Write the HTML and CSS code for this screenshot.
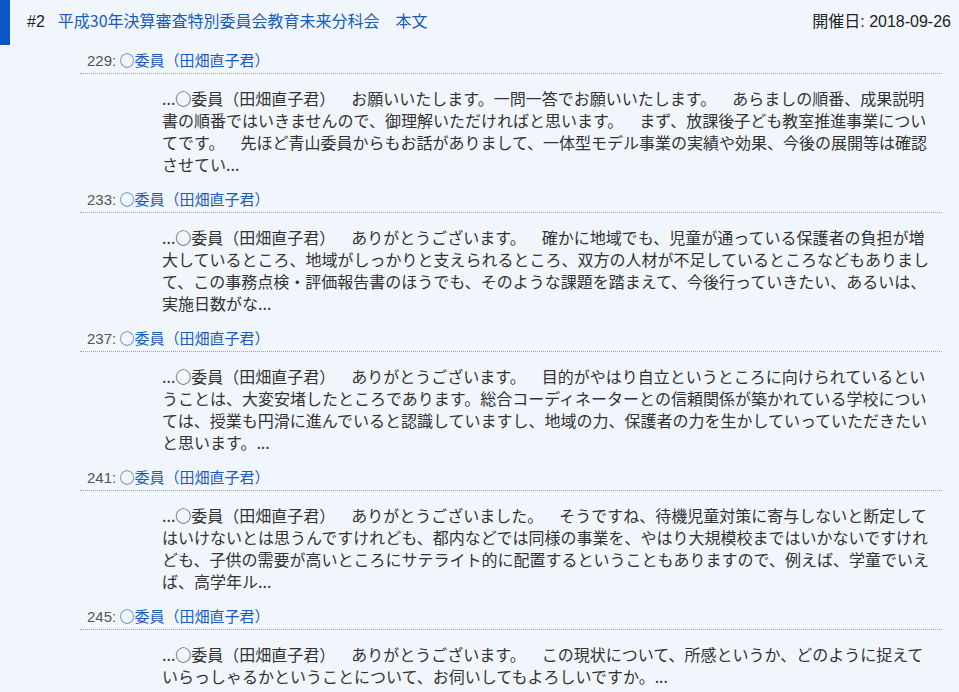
FILE: index.html
```html
<!DOCTYPE html>
<html lang="ja">
<head>
<meta charset="utf-8">
<title>平成30年決算審査特別委員会教育未来分科会　本文</title>
<link rel="stylesheet" href="styles.css">
</head>
<body>
<div class="page">
  <header class="meeting">
    <span class="meeting-no">#2</span>
    <a class="meeting-title" href="#">平成30年決算審査特別委員会教育未来分科会　本文</a>
    <span class="meeting-date">開催日: 2018-09-26</span>
  </header>
  <div class="hits">
    <div class="hit">
      <div class="hit-head"><span class="hit-no">229:</span> <a class="speaker" href="#">○委員（田畑直子君）</a></div>
      <p class="snippet">...○委員（田畑直子君）　お願いいたします。一問一答でお願いいたします。　あらましの順番、成果説明書の順番ではいきませんので、御理解いただければと思います。　まず、放課後子ども教室推進事業についてです。　先ほど青山委員からもお話がありまして、一体型モデル事業の実績や効果、今後の展開等は確認させてい...</p>
    </div>
    <div class="hit">
      <div class="hit-head"><span class="hit-no">233:</span> <a class="speaker" href="#">○委員（田畑直子君）</a></div>
      <p class="snippet">...○委員（田畑直子君）　ありがとうございます。　確かに地域でも、児童が通っている保護者の負担が増大しているところ、地域がしっかりと支えられるところ、双方の人材が不足しているところなどもありまして、この事務点検・評価報告書のほうでも、そのような課題を踏まえて、今後行っていきたい、あるいは、実施日数がな...</p>
    </div>
    <div class="hit">
      <div class="hit-head"><span class="hit-no">237:</span> <a class="speaker" href="#">○委員（田畑直子君）</a></div>
      <p class="snippet">...○委員（田畑直子君）　ありがとうございます。　目的がやはり自立というところに向けられているということは、大変安堵したところであります。総合コーディネーターとの信頼関係が築かれている学校については、授業も円滑に進んでいると認識していますし、地域の力、保護者の力を生かしていっていただきたいと思います。...</p>
    </div>
    <div class="hit">
      <div class="hit-head"><span class="hit-no">241:</span> <a class="speaker" href="#">○委員（田畑直子君）</a></div>
      <p class="snippet">...○委員（田畑直子君）　ありがとうございました。　そうですね、待機児童対策に寄与しないと断定してはいけないとは思うんですけれども、都内などでは同様の事業を、やはり大規模校まではいかないですけれども、子供の需要が高いところにサテライト的に配置するということもありますので、例えば、学童でいえば、高学年ル...</p>
    </div>
    <div class="hit">
      <div class="hit-head"><span class="hit-no">245:</span> <a class="speaker" href="#">○委員（田畑直子君）</a></div>
      <p class="snippet">...○委員（田畑直子君）　ありがとうございます。　この現状について、所感というか、どのように捉えていらっしゃるかということについて、お伺いしてもよろしいですか。...</p>
    </div>
  </div>
</div>
</body>
</html>
```
FILE: styles.css
```css
html, body {
  margin: 0;
  padding: 0;
  background: #f1f6fd;
}
body {
  font-family: "Noto Sans CJK JP", "Liberation Sans", sans-serif;
  color: #333;
  height: 692px;
  overflow: hidden;
  text-spacing-trim: space-all;
}
a {
  text-decoration: none;
}
.meeting {
  display: flex;
  align-items: baseline;
  height: 45px;
  box-sizing: border-box;
  border-left: 10px solid #0b55c6;
  padding: 8px 8px 0 17px;
  line-height: 24px;
}
.meeting-no {
  font-family: "Liberation Sans", "Noto Sans CJK JP", sans-serif;
  font-size: 16px;
  color: #222;
  margin-right: 13px;
}
.meeting-title {
  font-size: 16px;
  color: #1a5cba;
}
.meeting-date {
  font-family: "Liberation Sans", "Noto Sans CJK JP", sans-serif;
  margin-left: auto;
  font-size: 16px;
  color: #222;
}
.hits {
  margin: 4px 17px 0 80px;
}
.hit-head {
  height: 22px;
  overflow: hidden;
  font-size: 15px;
  line-height: 22px;
  padding: 0 7px 2px;
  border-bottom: 1px dotted #9da3ab;
}
.hit-no {
  font-family: "Liberation Sans", "Noto Sans CJK JP", sans-serif;
  color: #555;
}
.speaker {
  color: #1a5cba;
}
.snippet {
  margin: 13px 6px 13px 82px;
  font-size: 16px;
  line-height: 22px;
  color: #333;
}
```
